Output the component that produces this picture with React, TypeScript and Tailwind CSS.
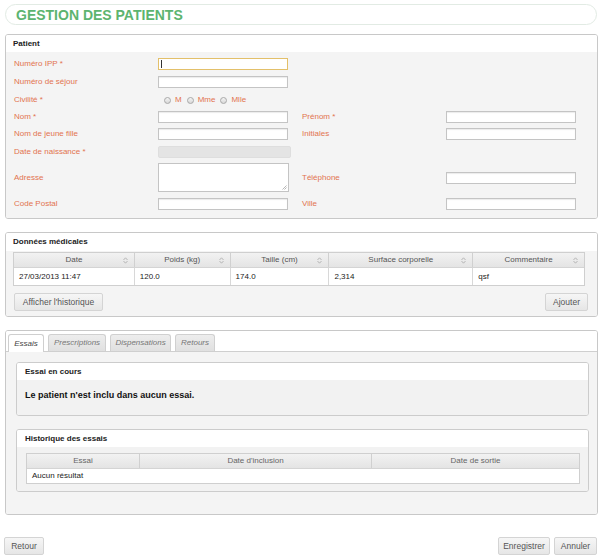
import React from "react";

const lbl = "text-[8px] text-[#e2734f] leading-none";
const inp = "h-[12px] border border-[#c4c4c4] bg-white shadow-[inset_0_1px_1px_rgba(0,0,0,0.08)]";

function Sort() {
  return (
    <svg width="5" height="7" viewBox="0 0 5 7" className="shrink-0">
      <path d="M0.5 3 L2.5 0.8 L4.5 3" fill="none" stroke="#aaa" strokeWidth="0.8" />
      <path d="M0.5 4 L2.5 6.2 L4.5 4" fill="none" stroke="#aaa" strokeWidth="0.8" />
    </svg>
  );
}

function Radio({ label }: { label: string }) {
  return (
    <div className="flex items-center gap-[4px] mr-[5px]">
      <span className="w-[7px] h-[7px] rounded-full border border-[#a8a8a8] bg-gradient-to-b from-[#f4f4f4] to-[#d8d8d8]" />
      <span className={lbl}>{label}</span>
    </div>
  );
}

function Btn({ children, cls = "" }: { children: React.ReactNode; cls?: string }) {
  return (
    <div
      className={
        "h-[18px] flex items-center justify-center border border-[#d4d4d4] rounded-[2px] bg-gradient-to-b from-[#f6f6f6] to-[#e6e6e6] text-[8.5px] text-[#555] " +
        cls
      }
    >
      {children}
    </div>
  );
}

export default function App() {
  const cols = [
    { t: "Date", w: 120, v: "27/03/2013 11:47" },
    { t: "Poids (kg)", w: 96, v: "120.0" },
    { t: "Taille (cm)", w: 99, v: "174.0" },
    { t: "Surface corporelle", w: 144, v: "2,314" },
    { t: "Commentaire", w: 112, v: "qsf" },
  ];
  return (
    <div className="w-[604px] h-[559px] bg-white relative overflow-hidden" style={{ fontFamily: '"Liberation Sans", Arial, sans-serif' }}>
      {/* Title */}
      <div className="mx-[5px] mt-[4px] w-[592px] h-[21px] rounded-full border border-[#e2ebe4] flex items-center pl-[10px]">
        <span className="text-[14px] font-bold text-[#5db470] leading-none">GESTION DES PATIENTS</span>
      </div>

      {/* Patient panel */}
      <div className="ml-[5px] mt-[9px] w-[593px] h-[185px] border border-[#c8c8c8] rounded-[3px] overflow-hidden flex flex-col">
        <div className="h-[17px] bg-white flex items-center pl-[7px] shrink-0">
          <span className="text-[8px] font-bold text-[#222] leading-none">Patient</span>
        </div>
        <div className="flex-1 bg-[#f4f4f4] pl-[8px] pt-[6px] flex flex-col">
          <div className="flex h-[18px]">
            <div className="w-[144px] h-[12px] flex items-center"><span className={lbl}>Numéro IPP *</span></div>
            <div className="w-[130px] h-[12px] border border-[#e3c06a] bg-white flex items-center pl-[2px]">
              <span className="w-[1px] h-[8px] bg-[#333]" />
            </div>
          </div>
          <div className="flex h-[18px]">
            <div className="w-[144px] h-[12px] flex items-center"><span className={lbl}>Numéro de séjour</span></div>
            <div className={inp + " w-[130px]"} />
          </div>
          <div className="flex h-[17px]">
            <div className="w-[150px] h-[12px] flex items-center"><span className={lbl}>Civilité *</span></div>
            <div className="h-[12px] flex items-center">
              <Radio label="M" />
              <Radio label="Mme" />
              <Radio label="Mlle" />
            </div>
          </div>
          <div className="flex h-[17px]">
            <div className="w-[144px] h-[12px] flex items-center"><span className={lbl}>Nom *</span></div>
            <div className={inp + " w-[130px]"} />
            <div className="w-[144px] ml-[14px] h-[12px] flex items-center"><span className={lbl}>Prénom *</span></div>
            <div className={inp + " w-[130px]"} />
          </div>
          <div className="flex h-[18px]">
            <div className="w-[144px] h-[12px] flex items-center"><span className={lbl}>Nom de jeune fille</span></div>
            <div className={inp + " w-[130px]"} />
            <div className="w-[144px] ml-[14px] h-[12px] flex items-center"><span className={lbl}>Initiales</span></div>
            <div className={inp + " w-[130px]"} />
          </div>
          <div className="flex h-[17px]">
            <div className="w-[144px] h-[12px] flex items-center"><span className={lbl}>Date de naissance *</span></div>
            <div className="w-[133px] h-[12px] rounded-[2px] bg-[#e4e4e4] border border-[#dedede]" />
          </div>
          <div className="flex h-[35px]">
            <div className="w-[144px] h-[29px] flex items-center"><span className={lbl}>Adresse</span></div>
            <div className={"w-[131px] h-[29px] border border-[#c4c4c4] bg-white relative"}>
              <svg width="5" height="5" viewBox="0 0 5 5" className="absolute right-[1px] bottom-[1px]">
                <path d="M4.5 0.5 L0.5 4.5 M4.5 2.5 L2.5 4.5" stroke="#999" strokeWidth="0.7" />
              </svg>
            </div>
            <div className="w-[144px] ml-[13px] h-[29px] flex items-center pt-[1px]"><span className={lbl}>Téléphone</span></div>
            <div className="h-[29px] flex items-center pt-[1px]"><div className={inp + " w-[130px]"} /></div>
          </div>
          <div className="flex h-[12px]">
            <div className="w-[144px] h-[12px] flex items-center"><span className={lbl}>Code Postal</span></div>
            <div className={inp + " w-[130px]"} />
            <div className="w-[144px] ml-[14px] h-[12px] flex items-center"><span className={lbl}>Ville</span></div>
            <div className={inp + " w-[130px]"} />
          </div>
        </div>
      </div>

      {/* Données médicales */}
      <div className="ml-[5px] mt-[13px] w-[593px] h-[85px] border border-[#c8c8c8] rounded-[3px] overflow-hidden flex flex-col">
        <div className="h-[18px] bg-white flex items-center pl-[7px] shrink-0">
          <span className="text-[8px] font-bold text-[#222] leading-none">Données médicales</span>
        </div>
        <div className="flex-1 bg-[#f4f4f4] pl-[7px] pt-[1px] flex flex-col">
          <div className="w-[572px] border border-[#cfcfcf] bg-white">
            <div className="flex h-[15px] bg-gradient-to-b from-[#f2f2f2] to-[#e4e4e4] border-b border-[#d4d4d4]">
              {cols.map((c, i) => (
                <div key={c.t} className={"relative flex items-center justify-center " + (i > 0 ? "border-l border-[#d0d0d0]" : "")} style={{ width: c.w }}>
                  <span className="text-[8px] text-[#555] leading-none">{c.t}</span>
                  <span className="absolute right-[6px] top-[4px]"><Sort /></span>
                </div>
              ))}
            </div>
            <div className="flex h-[17px]">
              {cols.map((c, i) => (
                <div key={c.t} className={"flex items-center pl-[5px] " + (i > 0 ? "border-l border-[#d8d8d8]" : "")} style={{ width: c.w }}>
                  <span className="text-[8px] text-[#222] leading-none">{c.v}</span>
                </div>
              ))}
            </div>
          </div>
          <div className="flex justify-between mt-[7px] ml-[1px] w-[574px]">
            <Btn cls="w-[89px]">Afficher l'historique</Btn>
            <Btn cls="w-[43px]">Ajouter</Btn>
          </div>
        </div>
      </div>

      {/* Tabs panel */}
      <div className="ml-[5px] mt-[13px] w-[593px] h-[185px] border border-[#c8c8c8] rounded-[3px] overflow-hidden flex flex-col">
        <div className="h-[21px] bg-white flex items-end pl-[2px] gap-[4px] shrink-0 border-b border-[#cfcfcf]">
          <div className="h-[18px] w-[36px] bg-white border border-[#cfcfcf] border-b-0 rounded-t-[3px] flex items-center justify-center -mb-[1px] relative z-10">
            <span className="text-[8px] italic text-[#444] leading-none">Essais</span>
          </div>
          {[
            ["Prescriptions", 58],
            ["Dispensations", 61],
            ["Retours", 40],
          ].map(([t, w]) => (
            <div key={t as string} className="h-[17px] bg-gradient-to-b from-[#ededed] to-[#e0e0e0] border border-[#d0d0d0] border-b-0 rounded-t-[3px] flex items-center justify-center" style={{ width: w as number }}>
              <span className="text-[8px] italic text-[#777] leading-none">{t}</span>
            </div>
          ))}
        </div>
        <div className="flex-1 bg-[#f4f4f4] pl-[10px] pt-[10px] flex flex-col">
          <div className="w-[573px] h-[54px] border border-[#cccccc] rounded-[3px] overflow-hidden flex flex-col">
            <div className="h-[17px] bg-white flex items-center pl-[8px] shrink-0">
              <span className="text-[8px] font-bold text-[#222] leading-none">Essai en cours</span>
            </div>
            <div className="flex-1 bg-[#f2f2f2] flex items-center pl-[8px] pb-[5px]">
              <span className="text-[9px] font-bold text-[#111] leading-none">Le patient n'est inclu dans aucun essai.</span>
            </div>
          </div>
          <div className="w-[573px] h-[63px] mt-[13px] border border-[#cccccc] rounded-[3px] overflow-hidden flex flex-col">
            <div className="h-[17px] bg-white flex items-center pl-[8px] shrink-0">
              <span className="text-[8px] font-bold text-[#222] leading-none">Historique des essais</span>
            </div>
            <div className="flex-1 bg-[#f2f2f2] pl-[9px] pt-[6px]">
              <div className="w-[554px] border border-[#cfcfcf] bg-white">
                <div className="flex h-[15px] bg-gradient-to-b from-[#f2f2f2] to-[#e4e4e4] border-b border-[#d4d4d4]">
                  {[
                    ["Essai", 112],
                    ["Date d'inclusion", 232],
                    ["Date de sortie", 208],
                  ].map(([t, w], i) => (
                    <div key={t as string} className={"flex items-center justify-center " + (i > 0 ? "border-l border-[#d0d0d0]" : "")} style={{ width: w as number }}>
                      <span className="text-[8px] text-[#666] leading-none">{t}</span>
                    </div>
                  ))}
                </div>
                <div className="h-[14px] flex items-center pl-[5px]">
                  <span className="text-[8px] text-[#222] leading-none">Aucun résultat</span>
                </div>
              </div>
            </div>
          </div>
        </div>
      </div>

      {/* Bottom buttons */}
      <div className="flex justify-between mt-[22px] pl-[4px] pr-[7px]">
        <Btn cls="w-[40px]">Retour</Btn>
        <div className="flex gap-[4px]">
          <Btn cls="w-[52px]">Enregistrer</Btn>
          <Btn cls="w-[43px]">Annuler</Btn>
        </div>
      </div>
    </div>
  );
}
